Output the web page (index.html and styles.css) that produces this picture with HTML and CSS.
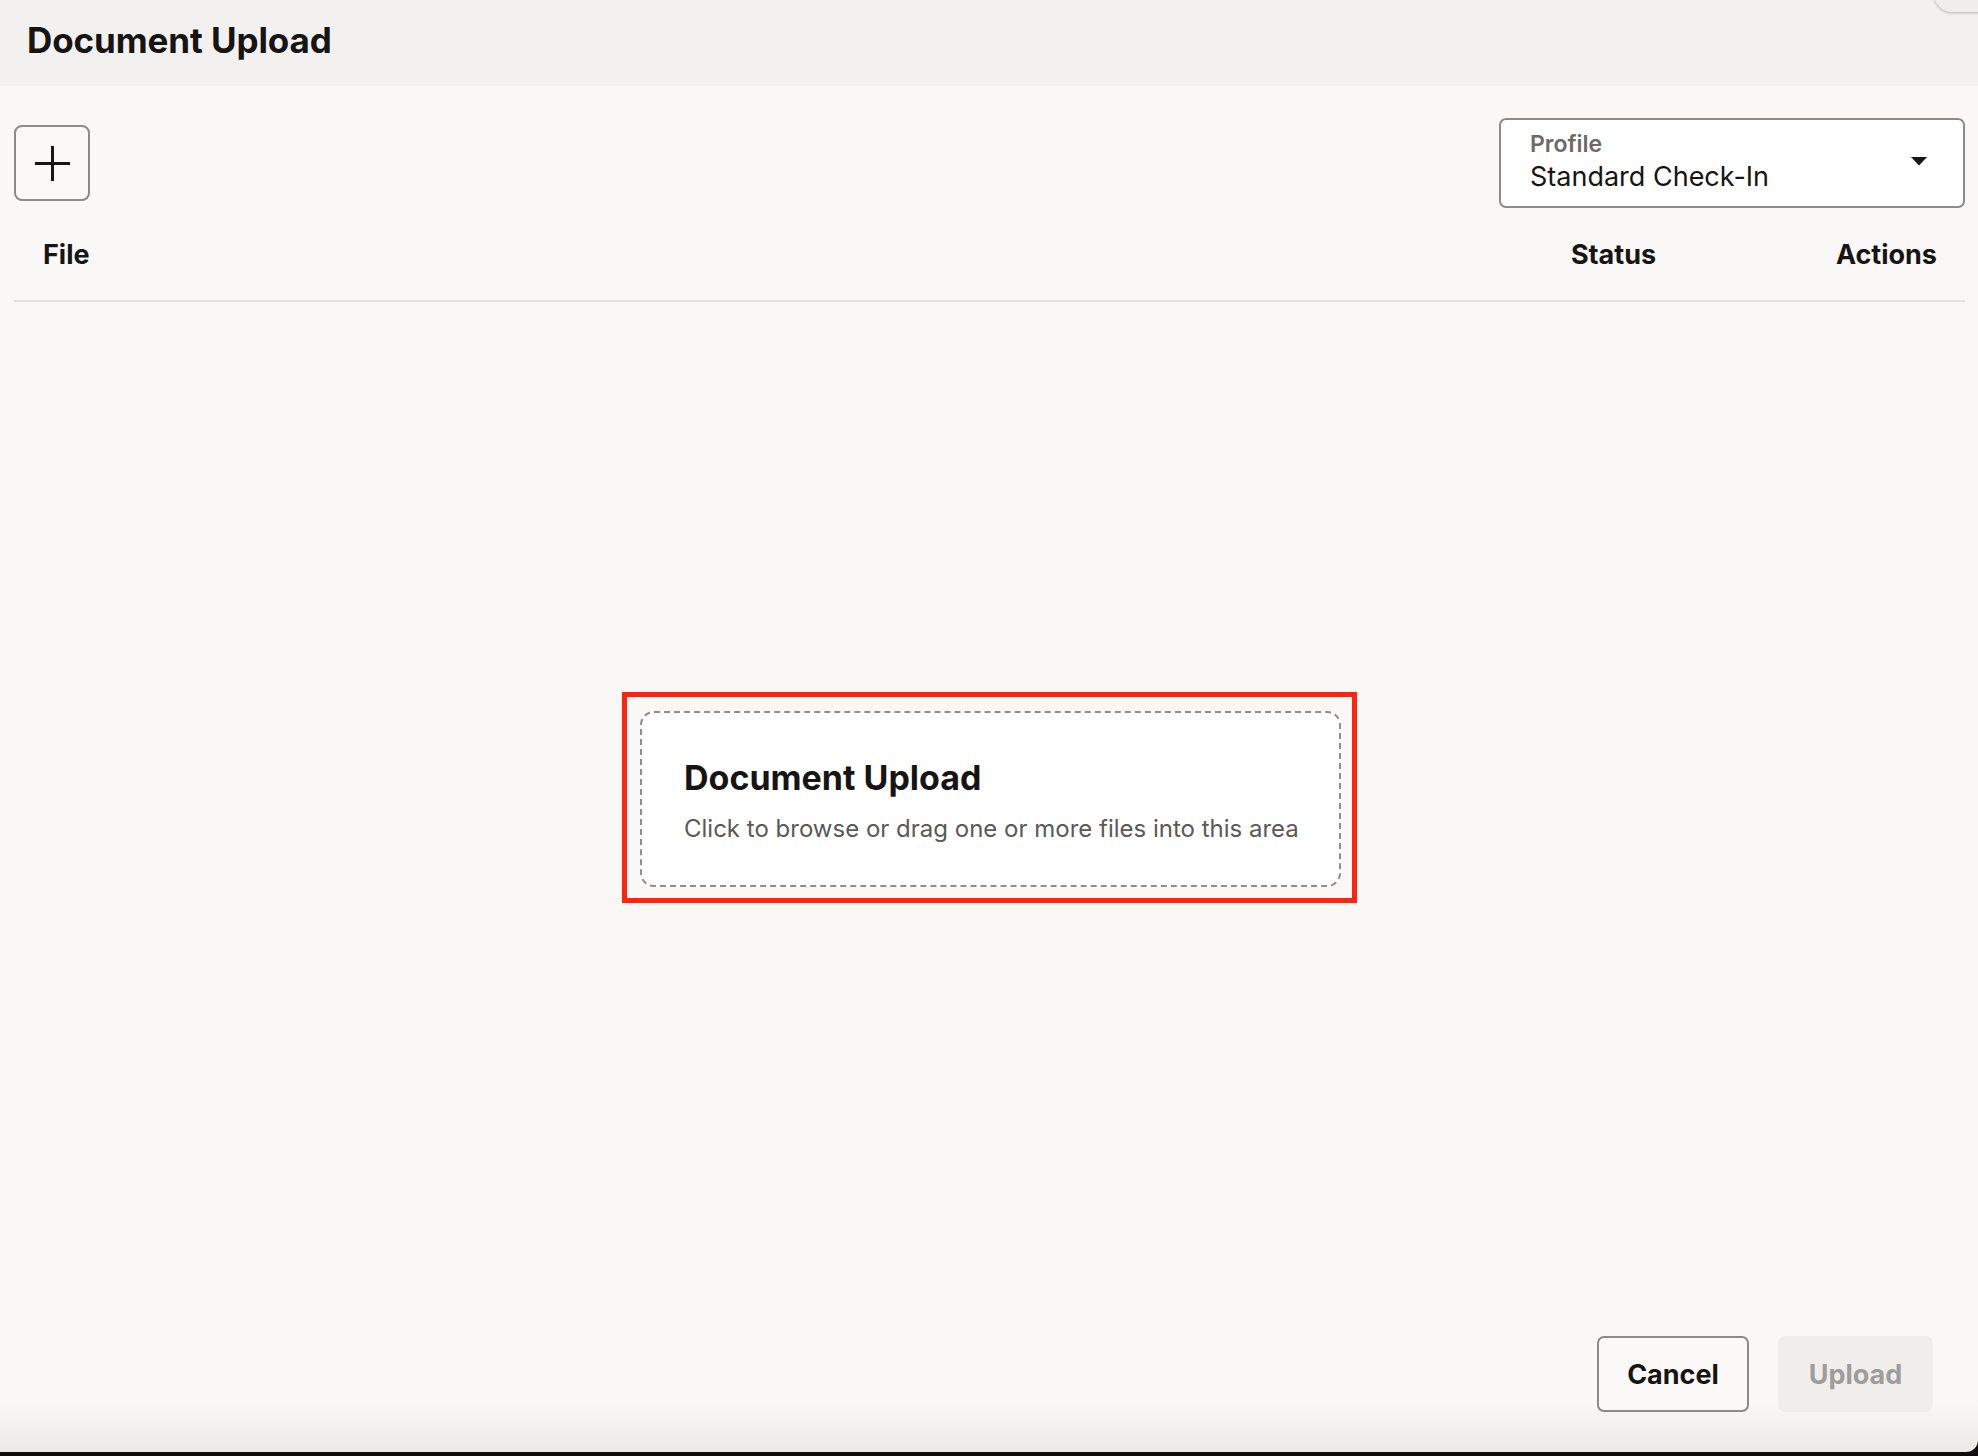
FILE: index.html
```html
<!DOCTYPE html>
<html lang="en">
<head>
<meta charset="utf-8">
<title>Document Upload</title>
<link rel="stylesheet" href="styles.css">
</head>
<body>
<div class="dialog">
  <div class="corner-btn"></div>
  <header class="dialog-header">
    <h1 class="dialog-title">Document Upload</h1>
  </header>
  <div class="toolbar">
    <button class="add-btn" aria-label="Add">
      <svg width="35" height="35" viewBox="0 0 35 35"><path d="M17.5 0V35M0 17.5H35" stroke="#161616" stroke-width="3" fill="none"/></svg>
    </button>
    <div class="select">
      <div class="select-text">
        <span class="select-label">Profile</span>
        <span class="select-value">Standard Check-In</span>
      </div>
      <svg class="select-arrow" width="16" height="9" viewBox="0 0 16 9"><path d="M0 0H16L8 8.5Z" fill="#161616"/></svg>
    </div>
  </div>
  <div class="table-head">
    <span class="col col-file">File</span>
    <span class="col col-status">Status</span>
    <span class="col col-actions">Actions</span>
  </div>
  <main class="table-body">
    <div class="highlight">
      <div class="dropzone">
        <div class="dz-title">Document Upload</div>
        <div class="dz-text">Click to browse or drag one or more files into this area</div>
      </div>
    </div>
  </main>
  <footer class="dialog-footer">
    <button class="btn btn-outline">Cancel</button>
    <button class="btn btn-disabled" disabled>Upload</button>
  </footer>
</div>
</body>
</html>
```
FILE: styles.css
```css
html, body {
  margin: 0;
  padding: 0;
}
body {
  background: #0e0e0e;
  width: 1978px;
  height: 1456px;
  overflow: hidden;
  font-family: Inter, "Noto Sans", sans-serif;
  color: #161616;
}
.dialog {
  position: relative;
  height: 1452px;
  display: flex;
  flex-direction: column;
  background: linear-gradient(to bottom, #f9f8f6 calc(100% - 50px), #eae9e7 100%);
  border-bottom-right-radius: 12px;
  overflow: hidden;
}
.corner-btn {
  position: absolute;
  right: -22px;
  top: -30px;
  width: 66px;
  height: 42px;
  border-radius: 18px;
  background: #efeeec;
  box-shadow: 0 1px 3px rgba(0,0,0,0.25);
}
.dialog-header {
  height: 86px;
  flex: none;
  background: #f2f1ef;
  display: flex;
  align-items: center;
  padding-left: 27px;
}
.dialog-title {
  margin: 0 0 6px 0;
  font-size: 35px;
  font-weight: 700;
  letter-spacing: -0.1px;
  color: #161513;
}
.toolbar {
  margin-top: 32px;
  height: 90px;
  display: flex;
  align-items: center;
  justify-content: space-between;
  padding: 0 13px 0 14px;
}
.add-btn {
  width: 76px;
  height: 76px;
  padding: 0;
  border: 2px solid #8b8b8b;
  border-radius: 8px;
  background: #faf9f7;
  display: flex;
  align-items: center;
  justify-content: center;
}
.select {
  box-sizing: border-box;
  width: 466px;
  height: 90px;
  border: 2px solid #8b8b8b;
  border-radius: 7px;
  background: #ffffff;
  display: flex;
  align-items: center;
  justify-content: space-between;
  padding: 0 36px 0 29px;
}
.select-text {
  align-self: flex-start;
  display: flex;
  flex-direction: column;
  padding-top: 10px;
}
.select-label {
  font-size: 23px;
  font-weight: 600;
  color: #6b6a68;
  line-height: 28px;
}
.select-value {
  margin-top: 1px;
  font-size: 27px;
  font-weight: 400;
  color: #161513;
  line-height: 36px;
}
.select-arrow {
  margin-bottom: 4px;
}
.table-head {
  height: 92px;
  display: flex;
  align-items: center;
  margin: 0 13px 0 14px;
  border-bottom: 2px solid #e3e2e0;
}
.col {
  font-size: 27px;
  font-weight: 700;
  color: #161513;
}
.col-file {
  margin-left: 29px;
  flex: 1;
}
.col-status {
  width: 265px;
}
.col-actions {
  margin-right: 28px;
}
.table-body {
  flex: 1;
  display: flex;
  justify-content: center;
  align-items: flex-start;
  padding-top: 390px;
  padding-left: 1px;
}
.highlight {
  box-sizing: border-box;
  width: 735px;
  height: 211px;
  border: 5px solid #fe2410;
  padding: 14px 10px 0 13px;
}
.dropzone {
  box-sizing: border-box;
  width: 701px;
  height: 176px;
  background: #ffffff;
  border: 2px dashed #8e8e8e;
  border-radius: 14px;
  padding: 45px 0 0 42px;
}
.dz-title {
  font-weight: 700;
  font-size: 34px;
  line-height: 40px;
  color: #161513;
  white-space: nowrap;
}
.dz-text {
  font-size: 24px;
  line-height: 30px;
  margin-top: 16px;
  color: #5a5957;
  white-space: nowrap;
}
.dialog-footer {
  flex: none;
  display: flex;
  justify-content: flex-end;
  gap: 29px;
  padding: 0 45px 40px 0;
}
.btn {
  box-sizing: border-box;
  height: 76px;
  font-family: Inter, "Noto Sans", sans-serif;
  font-size: 27px;
  font-weight: 700;
  border-radius: 7px;
  padding: 0;
}
.btn-outline {
  width: 152px;
  border: 2px solid #8b8b8b;
  background: #faf9f7;
  color: #161513;
}
.btn-disabled {
  width: 155px;
  border: none;
  background: #efeeec;
  color: #9e9d9b;
}
```
